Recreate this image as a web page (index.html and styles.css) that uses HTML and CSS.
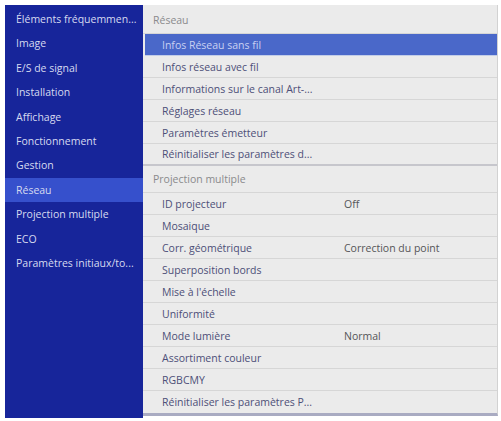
FILE: index.html
```html
<!DOCTYPE html>
<html lang="fr">
<head>
<meta charset="utf-8">
<title>Réseau</title>
<link rel="stylesheet" href="styles.css">
</head>
<body>
<div class="screen">
  <nav class="side">
    <div class="side-item">Éléments fréquemmen...</div>
    <div class="side-item">Image</div>
    <div class="side-item">E/S de signal</div>
    <div class="side-item">Installation</div>
    <div class="side-item">Affichage</div>
    <div class="side-item">Fonctionnement</div>
    <div class="side-item">Gestion</div>
    <div class="side-item active">Réseau</div>
    <div class="side-item">Projection multiple</div>
    <div class="side-item">ECO</div>
    <div class="side-item">Paramètres initiaux/to...</div>
  </nav>
  <main class="panel">
    <div class="head">Réseau</div>
    <div class="row selected"><span class="label">Infos Réseau sans fil</span></div>
    <div class="row"><span class="label">Infos réseau avec fil</span></div>
    <div class="row"><span class="label">Informations sur le canal Art-...</span></div>
    <div class="row"><span class="label">Réglages réseau</span></div>
    <div class="row"><span class="label">Paramètres émetteur</span></div>
    <div class="row last"><span class="label">Réinitialiser les paramètres d...</span></div>
    <div class="head second">Projection multiple</div>
    <div class="row"><span class="label">ID projecteur</span><span class="value">Off</span></div>
    <div class="row"><span class="label">Mosaique</span></div>
    <div class="row"><span class="label">Corr. géométrique</span><span class="value">Correction du point</span></div>
    <div class="row"><span class="label">Superposition bords</span></div>
    <div class="row"><span class="label">Mise à l'échelle</span></div>
    <div class="row"><span class="label">Uniformité</span></div>
    <div class="row"><span class="label">Mode lumière</span><span class="value">Normal</span></div>
    <div class="row"><span class="label">Assortiment couleur</span></div>
    <div class="row"><span class="label">RGBCMY</span></div>
    <div class="row end"><span class="label">Réinitialiser les paramètres P...</span></div>
  </main>
</div>
</body>
</html>
```
FILE: styles.css
```css
html, body {
  margin: 0;
  padding: 0;
  background: #ffffff;
}
body {
  font-family: "Open Sans", "Noto Sans", sans-serif;
  font-size: 10.5px;
}
.screen {
  display: flex;
  align-items: flex-start;
  padding: 5px 3px 0 5px;
  width: 501px;
  height: 421px;
  box-sizing: border-box;
}
.side {
  width: 138px;
  height: 413px;
  background: #17259a;
  padding-top: 2px;
  box-sizing: border-box;
  flex: none;
}
.side-item {
  height: 24.4px;
  line-height: 24.4px;
  padding-left: 11px;
  color: #d6daf0;
  white-space: nowrap;
}
.side-item.active {
  background: #3650cc;
}
.panel {
  flex: 1;
  background: #ebebeb;
  padding-top: 3px;
  border-right: 1px solid #d2d2d2;
  border-bottom: 3px solid #a9abc2;
}
.head {
  height: 26px;
  line-height: 24px;
  padding-left: 10px;
  color: #8a8a8c;
  border-bottom: 1px solid #d6d6d6;
  box-sizing: border-box;
}
.head.second {
  height: 27px;
  line-height: 26px;
}
.row {
  height: 22px;
  display: flex;
  align-items: center;
  padding-left: 19px;
  border-bottom: 1px solid #d6d6d6;
  box-sizing: border-box;
  color: #4d4f78;
}
.row.last {
  border-bottom: 2px solid #c6c6cc;
}
.row.end {
  border-bottom: none;
}
.row.selected {
  background: #4a68c9;
  color: #c9d1f2;
  margin-left: 2px;
  padding-left: 17px;
  border-bottom-color: #c2cde8;
}
.label {
  width: 182px;
  flex: none;
  white-space: nowrap;
}
.value {
  color: #555558;
}
```
